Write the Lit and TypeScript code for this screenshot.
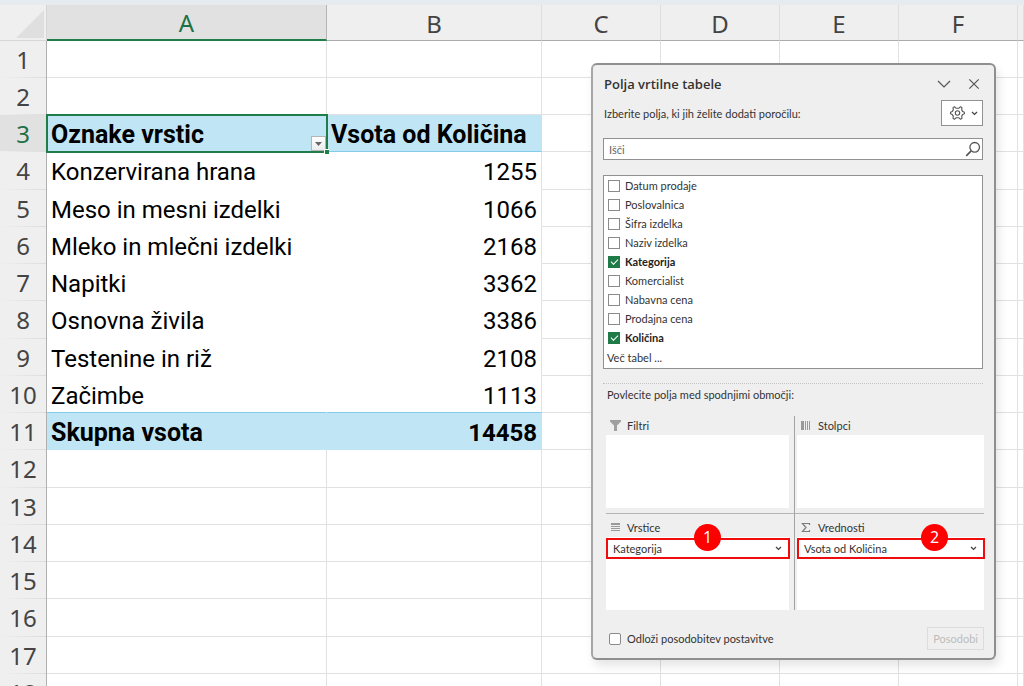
import { LitElement, html, css, svg } from "lit";
import { customElement, state } from "lit/decorators.js";
import { classMap } from "lit/directives/class-map.js";

interface PivotRow {
  label: string;
  value: string;
  kind: "head" | "body" | "total";
}

const PIVOT: Record<number, PivotRow> = {
  3: { label: "Oznake vrstic", value: "Vsota od Količina", kind: "head" },
  4: { label: "Konzervirana hrana", value: "1255", kind: "body" },
  5: { label: "Meso in mesni izdelki", value: "1066", kind: "body" },
  6: { label: "Mleko in mlečni izdelki", value: "2168", kind: "body" },
  7: { label: "Napitki", value: "3362", kind: "body" },
  8: { label: "Osnovna živila", value: "3386", kind: "body" },
  9: { label: "Testenine in riž", value: "2108", kind: "body" },
  10: { label: "Začimbe", value: "1113", kind: "body" },
  11: { label: "Skupna vsota", value: "14458", kind: "total" },
};

const COLUMNS = ["A", "B", "C", "D", "E", "F", ""];
const ROWS = Array.from({ length: 18 }, (_, i) => i + 1);

@customElement("pivot-sheet")
class PivotSheet extends LitElement {
  static styles = css`
    :host {
      display: block;
      font-family: Roboto, "Liberation Sans", sans-serif;
      font-size: 24px;
      color: #000;
    }
    table {
      width: 100%;
      table-layout: fixed;
      border-collapse: separate;
      border-spacing: 0;
    }
    .gutter { width: 47px; }
    .wide { width: 280px; }
    .medium { width: 215px; }
    .narrow { width: 119px; }
    th, td {
      box-sizing: border-box;
      padding: 0;
      line-height: 32px;
      white-space: nowrap;
    }
    tbody tr { height: 37px; }
    tbody tr:nth-child(4n) { height: 38px; }
    thead th {
      height: 36px;
      padding-top: 2px;
      background: #efefef;
      border-bottom: 1px solid #ababab;
      border-right: 1px solid #dedede;
      color: #444;
      font-family: "Noto Sans", "Open Sans", sans-serif;
      font-weight: 400;
      text-align: center;
    }
    thead th.corner { border-color: #d6d6d6; text-align: right; }
    .corner svg { display: block; margin: 0 2px 0 auto; }
    thead th.active {
      background: #e1e1e1;
      color: #1e7145;
      border-bottom: 2px solid #1f7d49;
      border-right-color: #b5b5b5;
    }
    tbody th {
      background: linear-gradient(to right, #efefef, #dcdcdc) bottom / 100% 1px no-repeat #efefef;
      border-right: 1px solid #b0b0b0;
      color: #444;
      font-family: "Noto Sans", "Open Sans", sans-serif;
      font-weight: 400;
      text-align: center;
    }
    tbody th.active { background-color: #e1e1e1; color: #1e7145; }
    td {
      padding-top: 3px;
      border-right: 1px solid #e1e1e1;
      border-bottom: 1px solid #e1e1e1;
    }
    td.label { padding-left: 4px; text-align: left; }
    td.value { padding-right: 4px; text-align: right; }
    td.body { border-bottom-color: #fff; }
    td.body.label { border-right-color: #fff; }
    td.head, td.total { background: #c0e6f5; border-color: #c0e6f5; font-weight: 700; }
    td.head, td.total.label { font-size: 25px; }
    td.head { border-bottom-color: #83cceb; }
    td.head.value { padding-left: 4px; text-align: left; }
    td.before-total { border-bottom-color: #83cceb; }
    td.selected { position: relative; }
    .ring {
      position: absolute;
      inset: -1px -2px -2px -1px;
      border: 2px solid #1f7d49;
      pointer-events: none;
    }
    .ring::after {
      content: "";
      position: absolute;
      right: -3px;
      bottom: -3px;
      width: 4px;
      height: 4px;
      background: #1f7d49;
      border: 1px solid #fff;
      border-right: 0;
      border-bottom: 0;
    }
    .filter {
      position: absolute;
      right: 0;
      bottom: 0;
      width: 15px;
      height: 15px;
      padding: 0;
      display: grid;
      place-items: center;
      background: linear-gradient(#fff, #ececec);
      border: 1px solid #b4b4b4;
    }
  `;

  render() {
    return html`
      <table>
        <colgroup>
          <col class="gutter" /><col class="wide" /><col class="medium" />
          <col class="narrow" /><col class="narrow" /><col class="narrow" /><col class="narrow" />
          <col />
        </colgroup>
        <thead>
          <tr>
            <th class="corner">
              <svg width="28" height="28" viewBox="0 0 28 28"><path d="M28 0V28H0Z" fill="#dfdfdf" /></svg>
            </th>
            ${COLUMNS.map((c) => html`<th scope="col" class=${classMap({ active: c === "A" })}>${c}</th>`)}
          </tr>
        </thead>
        <tbody>
          ${ROWS.map((n) => this.renderRow(n))}
        </tbody>
      </table>
    `;
  }

  private renderRow(n: number) {
    const row = PIVOT[n];
    const cls = (part: string) =>
      classMap({
        [part]: !!row,
        [row?.kind ?? "empty"]: true,
        "before-total": PIVOT[n + 1]?.kind === "total",
        selected: n === 3 && part === "label",
      });
    return html`
      <tr>
        <th scope="row" class=${classMap({ active: n === 3 })}>${n}</th>
        <td class=${cls("label")}>
          ${row?.label}
          ${n === 3
            ? html`<button class="filter" aria-label="Filtriraj oznake vrstic">
                  <svg width="7" height="4" viewBox="0 0 7 4"><path d="M0 0H7L3.5 4Z" fill="#666" /></svg>
                </button>
                <span class="ring"></span>`
            : null}
        </td>
        <td class=${cls("value")}>${row?.value}</td>
        <td></td><td></td><td></td><td></td><td></td>
      </tr>
    `;
  }
}

const ICONS = {
  filter: svg`<path d="M0 0H11V1.5L7 5.5V11H4V5.5L0 1.5Z" fill="#a0a0a0"/>`,
  columns: svg`<path d="M0 1H3V10H0Z" fill="#9a9a9a"/><path d="M4.5 1V10M6.5 1V10M8.5 1V10" stroke="#9a9a9a"/>`,
  rows: svg`<path d="M1 1H10V3H1Z" fill="#9a9a9a"/><path d="M1 4.5H10M1 6.5H10M1 8.5H10" stroke="#9a9a9a"/>`,
  sum: svg`<path d="M8.5 3V1.5H1.5L5 5.5L1.5 9.5H8.5V8" fill="none" stroke="#7d7d7d" stroke-width="1.2"/>`,
};

const smallChevron = html`<svg width="7" height="5" viewBox="0 0 7 5">
  <path d="M1 1L3.5 3.4L6 1" fill="none" stroke="#444" stroke-width="1.3" />
</svg>`;

interface Area {
  title: string;
  icon: keyof typeof ICONS;
  field?: string;
  step?: number;
}

const AREAS: Area[] = [
  { title: "Filtri", icon: "filter" },
  { title: "Stolpci", icon: "columns" },
  { title: "Vrstice", icon: "rows", field: "Kategorija", step: 1 },
  { title: "Vrednosti", icon: "sum", field: "Vsota od Količina", step: 2 },
];

@customElement("pivot-fields")
class PivotFields extends LitElement {
  @state() private fields = [
    { name: "Datum prodaje", on: false },
    { name: "Poslovalnica", on: false },
    { name: "Šifra izdelka", on: false },
    { name: "Naziv izdelka", on: false },
    { name: "Kategorija", on: true },
    { name: "Komercialist", on: false },
    { name: "Nabavna cena", on: false },
    { name: "Prodajna cena", on: false },
    { name: "Količina", on: true },
  ];

  static styles = css`
    :host {
      box-sizing: border-box;
      display: flex;
      flex-direction: column;
      padding: 9px 11px 8px 10px;
      background: #efefef;
      border: 2px solid #8f8f8f;
      border-left-color: #a6a6a6;
      border-radius: 6px;
      box-shadow: 3px 6px 10px rgba(0, 0, 0, 0.1);
      color: #333;
      font: 11px/19px Lato, "Open Sans", sans-serif;
    }
    button, input { font: inherit; color: inherit; margin: 0; }
    h2 { margin: 0; font: 600 13px/20px "Open Sans", sans-serif; }
    header, .intro, footer { display: flex; align-items: center; justify-content: space-between; }
    .tools { display: flex; gap: 17px; padding-right: 3px; }
    .tools button { display: flex; padding: 0; border: 0; background: none; }
    .intro { margin-top: 6px; padding-left: 1px; }
    h2 { padding-left: 1px; }
    .gear {
      display: flex;
      align-items: center;
      justify-content: center;
      gap: 6px;
      width: 42px;
      height: 26px;
      padding: 0 0 0 4px;
      background: #fff;
      border: 1px solid #919191;
    }
    .search {
      display: flex;
      align-items: center;
      height: 20px;
      margin-top: 12px;
      padding: 0 1px 0 5px;
      background: #fff;
      border: 1px solid #919191;
    }
    .search input { flex: 1; min-width: 0; height: 18px; padding: 0; border: 0; outline: 0; background: none; }
    .search input::placeholder { color: #666; opacity: 1; }
    .list {
      display: flex;
      flex-direction: column;
      height: 192px;
      margin-top: 15px;
      border: 1px solid #919191;
      background: #fff;
    }
    .list label { display: flex; align-items: center; gap: 5px; height: 19px; padding-left: 4px; }
    .list label.on { font-weight: 700; color: #222; }
    input[type="checkbox"] {
      appearance: none;
      flex: none;
      display: grid;
      place-items: center;
      width: 12px;
      height: 12px;
      background: #fff;
      border: 1px solid #8a8a8a;
    }
    input[type="checkbox"]:checked { background: #1f7a48; border-color: #1f7a48; }
    input[type="checkbox"]:checked::before {
      content: "";
      width: 6px;
      height: 3px;
      border: solid #fff;
      border-width: 0 0 1px 1px;
      transform: translateY(-1px) rotate(-45deg);
    }
    .more { margin-top: 1px; padding-left: 3px; color: inherit; text-decoration: none; }
    .drag { margin: 14px 0 0; padding: 1px 4px 0; border-top: 1px dotted #c4c4c4; }
    .areas { display: grid; grid-template-columns: 189px 1fr; margin: 12px -1px 0 3px; }
    .area:nth-child(odd) { border-right: 1px solid #a3a3a3; padding: 0 5px 5px 0; }
    .area:nth-child(even) { padding: 0 0 5px 2px; }
    .area:nth-child(n + 3) { border-top: 1px solid #b4b4b4; padding-top: 4px; padding-bottom: 0; }
    .title { display: flex; align-items: center; gap: 6px; height: 19px; margin: 0; padding-left: 4px; font-weight: 400; font-size: 11px; }
    .drop { display: flow-root; height: 73px; background: #fff; }
    .slot { position: relative; margin: 1px -1px 0 0; }
    .chip {
      display: flex;
      align-items: center;
      justify-content: space-between;
      box-sizing: border-box;
      width: 100%;
      height: 21px;
      padding: 0 6px 0 5px;
      background: #fff;
      border: 2px solid #f00c0c;
      text-align: left;
    }
    .badge {
      position: absolute;
      top: -14px;
      display: grid;
      place-items: center;
      width: 27px;
      height: 27px;
      border-radius: 50%;
      background: #fe0000;
      color: #fff;
      font: 16px/27px "Open Sans", sans-serif;
    }
    .step1 { right: 69px; }
    .step2 { right: 37px; }
    footer { margin: 17px -1px 0 0; padding-left: 6px; }
    footer label { display: flex; align-items: center; gap: 6px; }
    footer input[type="checkbox"] { border-radius: 2px; }
    .update {
      height: 23px;
      padding: 0 5px;
      background: #efefef;
      border: 1px solid #dcdcdc;
      color: #bcbcbc;
    }
  `;

  private toggle(i: number) {
    this.fields = this.fields.map((f, j) => (j === i ? { ...f, on: !f.on } : f));
  }

  render() {
    return html`
      <header>
        <h2>Polja vrtilne tabele</h2>
        <div class="tools">
          <button aria-label="Možnosti podokna">
            <svg width="14" height="12" viewBox="0 0 14 12"><path d="M1 3L7 9L13 3" fill="none" stroke="#555" stroke-width="1.2" /></svg>
          </button>
          <button aria-label="Zapri">
            <svg width="12" height="12" viewBox="0 0 12 12"><path d="M1.3 1.3L10.7 10.7M10.7 1.3L1.3 10.7" stroke="#555" stroke-width="1.2" /></svg>
          </button>
        </div>
      </header>
      <div class="intro">
        <span>Izberite polja, ki jih želite dodati poročilu:</span>
        <button class="gear" aria-label="Orodja">
          <svg width="15" height="14" viewBox="0 0 15 14" fill="none" stroke="#555" stroke-width="1.1" stroke-linejoin="round">
            <path d="M4.4 .7L6 2.2H9L10.6 .7L12 1.6L11.7 3.9L12.8 5.6L14.4 6.2V7.8L12.8 8.4L11.7 10.1L12 12.4L10.6 13.3L9 11.8H6L4.4 13.3L3 12.4L3.3 10.1L2.2 8.4L.6 7.8V6.2L2.2 5.6L3.3 3.9L3 1.6Z" />
            <circle cx="7.5" cy="7" r="2.2" />
          </svg>
          ${smallChevron}
        </button>
      </div>
      <div class="search">
        <input type="text" placeholder="Išči" aria-label="Išči" />
        <svg width="16" height="16" viewBox="0 0 16 16" fill="none" stroke="#555">
          <circle cx="9.7" cy="6.3" r="4.8" stroke-width="1.3" /><path d="M6.2 9.8L1.2 14.8" stroke-width="1.7" />
        </svg>
      </div>
      <div class="list">
        ${this.fields.map(
          (f, i) => html`<label class=${classMap({ on: f.on })}>
            <input type="checkbox" .checked=${f.on} @change=${() => this.toggle(i)} />${f.name}
          </label>`
        )}
        <a class="more" href="#">Več tabel ...</a>
      </div>
      <p class="drag">Povlecite polja med spodnjimi območji:</p>
      <div class="areas">
        ${AREAS.map(
          (a) => html`<section class="area">
            <h3 class="title"><svg width="11" height="11" viewBox="0 0 11 11">${ICONS[a.icon]}</svg>${a.title}</h3>
            <div class="drop">
              ${a.field
                ? html`<div class="slot">
                    <button class="chip" aria-haspopup="menu">${a.field}${smallChevron}</button>
                    <span class="badge step${a.step}">${a.step}</span>
                  </div>`
                : null}
            </div>
          </section>`
        )}
      </div>
      <footer>
        <label><input type="checkbox" />Odloži posodobitev postavitve</label>
        <button class="update" disabled>Posodobi</button>
      </footer>
    `;
  }
}

@customElement("app-root")
class AppRoot extends LitElement {
  static styles = css`
    :host {
      display: block;
      position: relative;
      box-sizing: border-box;
      height: 100vh;
      padding-top: 5px;
      overflow: hidden;
      background: linear-gradient(#e6ebf0 5px, #fff 5px);
    }
    .pane {
      position: absolute;
      top: 63px;
      right: 28px;
      width: 405px;
    }
  `;

  render() {
    return html`
      <pivot-sheet></pivot-sheet>
      <pivot-fields class="pane"></pivot-fields>
    `;
  }
}
